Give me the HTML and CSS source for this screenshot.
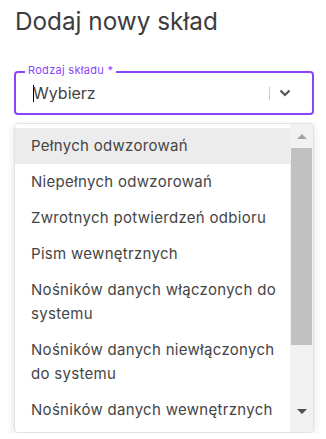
FILE: index.html
```html
<!DOCTYPE html>
<html lang="pl">
<head>
    <meta charset="UTF-8">
    <meta name="viewport" content="width=device-width, initial-scale=1.0">
    <title>Dodaj nowy skład</title>
    <link rel="stylesheet" href="styles.css">
</head>
<body>
    <div class="page">
        <h1>Dodaj nowy skład</h1>

        <div class="field">
            <span class="field-label">Rodzaj składu *</span>
            <div class="select-box">
                <span class="caret"></span>
                <span class="select-value">Wybierz</span>
                <span class="separator"></span>
                <svg class="chevron" width="12" height="8" viewBox="0 0 12 8">
                    <path d="M1.5 1.5 L6 6 L10.5 1.5" fill="none" stroke="#555" stroke-width="2.2"/>
                </svg>
            </div>
        </div>

        <div class="menu">
            <ul class="options">
                <li class="active">Pełnych odwzorowań</li>
                <li>Niepełnych odwzorowań</li>
                <li>Zwrotnych potwierdzeń odbioru</li>
                <li>Pism wewnętrznych</li>
                <li>Nośników danych włączonych do systemu</li>
                <li>Nośników danych niewłączonych do systemu</li>
                <li>Nośników danych wewnętrznych</li>
            </ul>
            <div class="scrollbar">
                <span class="arrow up"></span>
                <span class="thumb"></span>
                <span class="arrow down"></span>
            </div>
        </div>
    </div>
</body>
</html>
```

FILE: styles.css
```css
body {
    margin: 0;
    background-color: #ffffff;
    font-family: "Inter", Arial, sans-serif;
    color: #454545;
}
.page {
    padding: 6px 12px 0 14px;
}
h1 {
    margin: 0 0 0 1px;
    font-size: 24.3px;
    font-weight: 400;
    color: #3d3d3d;
    line-height: 30px;
}
.field {
    position: relative;
    margin-top: 35px;
}
.field-label {
    position: absolute;
    top: -7px;
    left: 11px;
    padding: 0 3px;
    background: #ffffff;
    font-size: 11px;
    line-height: 13px;
    letter-spacing: 0.3px;
    color: #8b44f7;
}
.select-box {
    display: flex;
    align-items: center;
    height: 40px;
    border: 2px solid #8b44f7;
    border-radius: 4px;
    padding: 0 21px 0 17px;
}
.caret {
    width: 1px;
    height: 17px;
    background: #000000;
    margin-right: -1px;
}
.select-value {
    flex: 1;
    font-size: 16px;
    color: #454545;
}
.separator {
    width: 1px;
    height: 13px;
    background: #cccccc;
    margin-right: 9px;
}
.chevron {
    display: block;
}
.menu {
    display: flex;
    margin-top: 8px;
    height: 308px;
    border: 1px solid #e2e2e2;
    border-radius: 4px;
    box-shadow: 0 3px 8px rgba(0, 0, 0, 0.12);
    overflow: hidden;
}
.options {
    flex: 1;
    list-style: none;
    margin: 0;
    padding: 4px 0 0 0;
    overflow: hidden;
}
.options li {
    padding: 6px 10px 6px 16px;
    font-size: 15px;
    line-height: 24px;
    letter-spacing: 0.3px;
    color: #454545;
}
.options li.active {
    background-color: #ececec;
}
.scrollbar {
    width: 23px;
    background: #f1f1f1;
    display: flex;
    flex-direction: column;
    align-items: center;
}
.arrow {
    width: 0;
    height: 0;
    border-left: 5px solid transparent;
    border-right: 5px solid transparent;
}
.arrow.up {
    margin-top: 10px;
    border-bottom: 5px solid #a3a3a3;
}
.arrow.down {
    margin-top: auto;
    margin-bottom: 18px;
    border-top: 5px solid #505050;
}
.thumb {
    margin-top: 9px;
    width: 21px;
    height: 197px;
    background: #c1c1c1;
}
```
